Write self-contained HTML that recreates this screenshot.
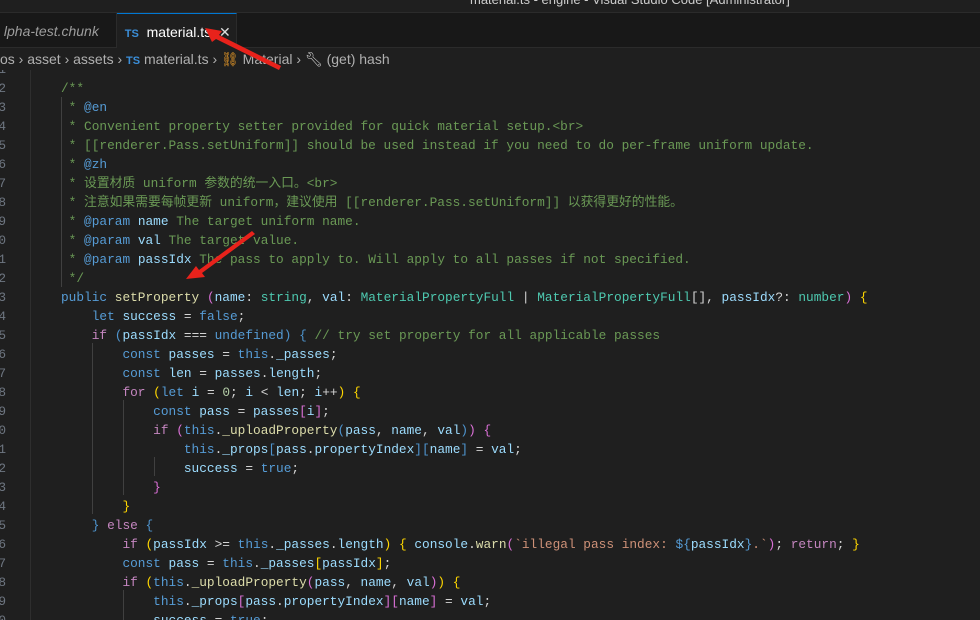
<!DOCTYPE html>
<html style="overflow:hidden;width:980px;height:620px"><head><meta charset="utf-8"><style>
body{margin:0;width:980px;height:620px;overflow:hidden;background:#1f1f1f;position:relative;font-family:"Liberation Sans","Noto Sans CJK SC",sans-serif}
.title{position:absolute;left:0;top:0;width:980px;height:12px;background:#1f1f1f;border-bottom:1px solid #2b2b2b;overflow:hidden;z-index:2}
.title span{position:absolute;left:470px;top:-8px;color:#ccc;font-size:13px}
.tabs{position:absolute;left:0;top:13px;width:980px;height:34px;background:#181818;border-bottom:1px solid #2b2b2b;z-index:2}
.tab{position:absolute;top:0;height:34px;line-height:36px;font-size:14px}
.t1{left:0;width:116px;color:#9d9d9d;font-style:italic;border-right:1px solid #2b2b2b}
.t2{left:117px;width:119px;background:#1f1f1f;border-top:1px solid #0078d4;height:34px;color:#fff;border-right:1px solid #2b2b2b}
.ts{color:#3b8ed8;font-weight:bold;font-size:11px}
.bc{position:absolute;left:0;top:48px;height:22px;line-height:22px;width:980px;color:#b0b0b0;font-size:14px;white-space:pre;background:#1f1f1f;z-index:2}
.code{position:absolute;left:0;top:0;width:980px;height:620px;overflow:hidden;font-family:"Liberation Mono","Noto Sans CJK SC",monospace;font-size:12.8px;line-height:19px;white-space:pre}
.ln{position:absolute;left:-6px;width:12px;color:#6e7681;text-align:right}
.l{position:absolute;left:61px;color:#9cdcfe}
.c{color:#6a9955}.k{color:#569cd6}.p{color:#c586c0}.f{color:#dcdcaa}.t{color:#4ec9b0}.w{color:#d4d4d4}.v{color:#9cdcfe}.y{color:#ffd700}.m{color:#da70d6}.s{color:#ce9178}.n{color:#b5cea8}.g{color:#4e94ce}
.guide{position:absolute;width:1px;background:#404040}
</style></head><body>
<div class="title"><span>material.ts - engine - Visual Studio Code [Administrator]</span></div>
<div class="tabs">
<div class="tab t1">&nbsp;lpha-test.chunk</div>
<div class="tab t2">&nbsp;&nbsp;<span class="ts">TS</span>&nbsp; material.ts&nbsp; <span style="color:#ddd">✕</span></div>
</div>
<div class="bc">os › asset › assets › <span class="ts">TS</span> material.ts › <span style="color:#ee9d28">⛓</span> Material › <span style="color:#ccc">🔧︎</span> (get) hash</div>
<div class="guide" style="left:30px;top:70px;height:550px;background:#2e2e2e"></div>
<div class="guide" style="left:61px;top:97px;height:190px"></div>
<div class="guide" style="left:92px;top:343px;height:171px"></div>
<div class="guide" style="left:123px;top:400px;height:95px"></div>
<div class="guide" style="left:154px;top:457px;height:19px"></div>
<div class="guide" style="left:123px;top:590px;height:30px"></div>
<div class="code" id="c"></div>
<svg style="position:absolute;left:0;top:0;z-index:3" width="980" height="620"><g fill="#e8221b">
<polygon points="205,28 222,31 219,35 281,66 279,70 216,39 212,42"/>
<polygon points="186,279 196,266 199,270 252,231 255,234 202,273 205,277"/></g></svg>
<script>
var L=[
['1',''],
['2','<span class="c">/**</span>'],
['3','<span class="c"> * <span class="k">@en</span></span>'],
['4','<span class="c"> * Convenient property setter provided for quick material setup.&lt;br&gt;</span>'],
['5','<span class="c"> * [[renderer.Pass.setUniform]] should be used instead if you need to do per-frame uniform update.</span>'],
['6','<span class="c"> * <span class="k">@zh</span></span>'],
['7','<span class="c"> * 设置材质 uniform 参数的统一入口。&lt;br&gt;</span>'],
['8','<span class="c"> * 注意如果需要每帧更新 uniform，建议使用 [[renderer.Pass.setUniform]] 以获得更好的性能。</span>'],
['9','<span class="c"> * <span class="k">@param</span> <span class="v">name</span> The target uniform name.</span>'],
['0','<span class="c"> * <span class="k">@param</span> <span class="v">val</span> The target value.</span>'],
['1','<span class="c"> * <span class="k">@param</span> <span class="v">passIdx</span> The pass to apply to. Will apply to all passes if not specified.</span>'],
['2','<span class="c"> */</span>'],
['3','<span class="k">public</span> <span class="f">setProperty</span> <span class="m">(</span>name<span class="w">:</span> <span class="t">string</span><span class="w">,</span> val<span class="w">:</span> <span class="t">MaterialPropertyFull</span> <span class="w">|</span> <span class="t">MaterialPropertyFull</span><span class="w">[],</span> passIdx<span class="w">?:</span> <span class="t">number</span><span class="m">)</span> <span class="y">{</span>'],
['4','    <span class="k">let</span> success <span class="w">=</span> <span class="k">false</span><span class="w">;</span>'],
['5','    <span class="p">if</span> <span class="g">(</span>passIdx <span class="w">===</span> <span class="k">undefined</span><span class="g">)</span> <span class="g">{</span> <span class="c">// try set property for all applicable passes</span>'],
['6','        <span class="k">const</span> passes <span class="w">=</span> <span class="k">this</span><span class="w">.</span>_passes<span class="w">;</span>'],
['7','        <span class="k">const</span> len <span class="w">=</span> passes<span class="w">.</span>length<span class="w">;</span>'],
['8','        <span class="p">for</span> <span class="y">(</span><span class="k">let</span> i <span class="w">=</span> <span class="n">0</span><span class="w">;</span> i <span class="w">&lt;</span> len<span class="w">;</span> i<span class="w">++</span><span class="y">)</span> <span class="y">{</span>'],
['9','            <span class="k">const</span> pass <span class="w">=</span> passes<span class="m">[</span>i<span class="m">]</span><span class="w">;</span>'],
['0','            <span class="p">if</span> <span class="m">(</span><span class="k">this</span><span class="w">.</span><span class="f">_uploadProperty</span><span class="g">(</span>pass<span class="w">,</span> name<span class="w">,</span> val<span class="g">)</span><span class="m">)</span> <span class="m">{</span>'],
['1','                <span class="k">this</span><span class="w">.</span>_props<span class="g">[</span>pass<span class="w">.</span>propertyIndex<span class="g">][</span>name<span class="g">]</span> <span class="w">=</span> val<span class="w">;</span>'],
['2','                success <span class="w">=</span> <span class="k">true</span><span class="w">;</span>'],
['3','            <span class="m">}</span>'],
['4','        <span class="y">}</span>'],
['5','    <span class="g">}</span> <span class="p">else</span> <span class="g">{</span>'],
['6','        <span class="p">if</span> <span class="y">(</span>passIdx <span class="w">&gt;=</span> <span class="k">this</span><span class="w">.</span>_passes<span class="w">.</span>length<span class="y">)</span> <span class="y">{</span> console<span class="w">.</span><span class="f">warn</span><span class="m">(</span><span class="s">`illegal pass index: </span><span class="k">${</span>passIdx<span class="k">}</span><span class="s">.`</span><span class="m">)</span><span class="w">;</span> <span class="p">return</span><span class="w">;</span> <span class="y">}</span>'],
['7','        <span class="k">const</span> pass <span class="w">=</span> <span class="k">this</span><span class="w">.</span>_passes<span class="y">[</span>passIdx<span class="y">]</span><span class="w">;</span>'],
['8','        <span class="p">if</span> <span class="y">(</span><span class="k">this</span><span class="w">.</span><span class="f">_uploadProperty</span><span class="m">(</span>pass<span class="w">,</span> name<span class="w">,</span> val<span class="m">)</span><span class="y">)</span> <span class="y">{</span>'],
['9','            <span class="k">this</span><span class="w">.</span>_props<span class="m">[</span>pass<span class="w">.</span>propertyIndex<span class="m">][</span>name<span class="m">]</span> <span class="w">=</span> val<span class="w">;</span>'],
['0','            success <span class="w">=</span> <span class="k">true</span><span class="w">;</span>']
];
var h='';L.forEach(function(x,i){var t=60+i*19;h+='<div class="ln" style="top:'+t+'px">'+x[0]+'</div><div class="l" style="top:'+t+'px">'+x[1]+'</div>';});
document.getElementById('c').innerHTML=h;
</script>
</body></html>
